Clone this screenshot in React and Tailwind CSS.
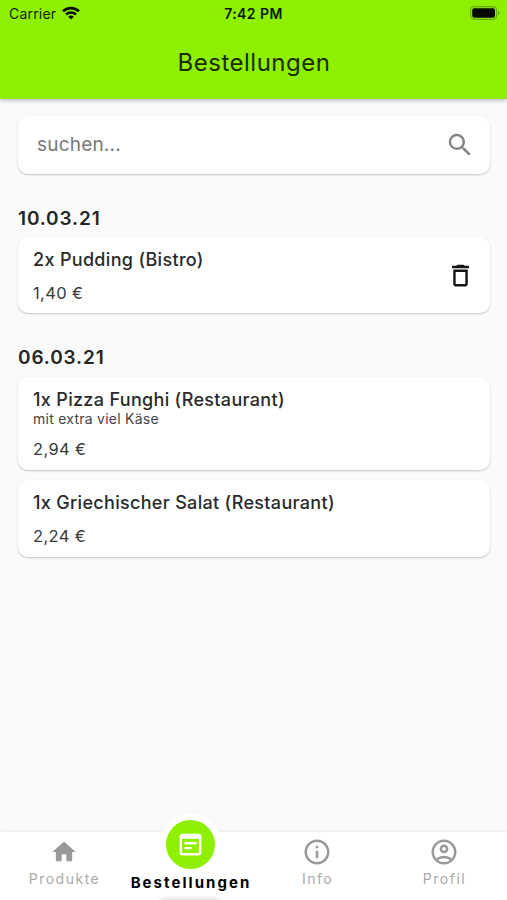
import React from 'react';

const PATHS = {
  search:
    'M15.5 14h-.79l-.28-.27A6.471 6.471 0 0 0 16 9.5 6.5 6.5 0 1 0 9.5 16c1.61 0 3.09-.59 4.23-1.57l.27.28v.79l5 4.99L20.49 19l-4.99-5zm-6 0C7.01 14 5 11.99 5 9.5S7.01 5 9.5 5 14 7.01 14 9.5 11.99 14 9.5 14z',
  trash:
    'M6 19c0 1.1.9 2 2 2h8c1.1 0 2-.9 2-2V7H6v12zM8 9h8v10H8V9zm7.5-5l-1-1h-5l-1 1H5v2h14V4h-3.5z',
  home: 'M10 20v-6h4v6h5v-8h3L12 3 2 12h3v8z',
  info: 'M11 7h2v2h-2zm0 4h2v6h-2zm1-9C6.48 2 2 6.48 2 12s4.48 10 10 10 10-4.48 10-10S17.52 2 12 2zm0 18c-4.41 0-8-3.59-8-8s3.59-8 8-8 8 3.59 8 8-3.59 8-8 8z',
  orders:
    'M19 3H5c-1.11 0-2 .9-2 2v14c0 1.1.89 2 2 2h14c1.1 0 2-.9 2-2V5c0-1.1-.9-2-2-2zm0 16H5V7.3h14v11.7zM17 12H7v-2h10v2zm-4 4H7v-2h6v2z',
  profile:
    'M12 2C6.48 2 2 6.48 2 12s4.48 10 10 10 10-4.48 10-10S17.52 2 12 2zM7.35 18.5C8.66 17.56 10.26 17 12 17s3.34.56 4.65 1.5C15.34 19.44 13.74 20 12 20s-3.34-.56-4.65-1.5zm10.79-1.38C16.45 15.8 14.32 15 12 15s-4.45.8-6.14 2.12C4.7 15.73 4 13.95 4 12c0-4.42 3.58-8 8-8s8 3.58 8 8c0 1.95-.7 3.73-1.86 5.12zM12 6c-1.93 0-3.5 1.57-3.5 3.5S10.07 13 12 13s3.5-1.57 3.5-3.5S13.93 6 12 6zm0 5c-.83 0-1.5-.67-1.5-1.5S11.17 8 12 8s1.5.67 1.5 1.5S12.83 11 12 11z',
};

function Icon({ name, className }) {
  return (
    <svg viewBox="0 0 24 24" fill="currentColor" className={className} aria-hidden="true">
      <path d={PATHS[name]} />
    </svg>
  );
}

function Wifi() {
  return (
    <svg viewBox="0 0 18 14" className="-mt-[2px] ml-[6px] h-[14px] w-[18px]" fill="none" stroke="#071000" strokeWidth="2.6">
      <path d="M1 5.3a11.6 11.6 0 0 1 16 0" />
      <path d="M4 8.5a7.2 7.2 0 0 1 10 0" />
      <path d="M9 13.6 6.2 10.8a4 4 0 0 1 5.6 0z" fill="#071000" stroke="none" />
    </svg>
  );
}

function Battery() {
  return (
    <svg viewBox="0 0 30 14" className="-mt-[1px] h-[14px] w-[30px]">
      <rect x="0.6" y="0.6" width="26" height="12.8" rx="3.6" fill="none" stroke="#65aa00" strokeWidth="1.1" />
      <rect x="2.2" y="2.3" width="22.8" height="9.4" rx="2" fill="#050a00" />
      <path d="M28 4.8c1.9.7 1.9 3.7 0 4.4z" fill="#65aa00" />
    </svg>
  );
}

function Header() {
  return (
    <header className="relative z-10 h-[98.5px] shrink-0 bg-[#8ef000] shadow-[0_1px_5px_rgba(0,0,0,0.3)]">
      <div className="grid h-[27px] grid-cols-3 items-center pl-[9px] pr-[7px] text-[14px] leading-[27px] text-[#142300]">
        <div className="flex items-center tracking-[0.2px]">
          Carrier
          <Wifi />
        </div>
        <div className="-ml-[2px] text-center font-semibold tracking-[0.45px] text-[#0d1800]">7:42 PM</div>
        <div className="flex justify-end">
          <Battery />
        </div>
      </div>
      <h1 className="mt-[20px] pl-px text-center text-[24px] leading-[32px] tracking-[0.5px] text-[#1a2c00]">Bestellungen</h1>
    </header>
  );
}

function Card({ className, children }) {
  return (
    <div
      className={`rounded-[10px] bg-white shadow-[0_1px_2px_rgba(0,0,0,0.22)] ${className}`}
    >
      {children}
    </div>
  );
}

function Order({ title, note, price, removable, className }) {
  return (
    <Card className={`flex items-center justify-between pl-[15px] pr-[15px] ${className}`}>
      <div className="flex h-full flex-col pt-[11px]">
        <div className="text-[18px] font-medium leading-[24px] tracking-[0.32px] text-[#2a2a2a]">{title}</div>
        {note && <div className="-mt-[2px] text-[14px] leading-[18px] tracking-[0.25px] text-[#444]">{note}</div>}
        <div className="mt-[10px] text-[16.5px] leading-[22px] tracking-[0.35px] text-[#3a3a3a]">{price}</div>
      </div>
      {removable && <Icon name="trash" className="h-[29px] w-[29px] text-[#151515]" />}
    </Card>
  );
}

function DateLabel({ children, className }) {
  return (
    <h2 className={`text-[19px] font-semibold leading-[24px] tracking-[0.85px] text-[#252525] ${className}`}>
      {children}
    </h2>
  );
}

function Tab({ icon, label, iconSize = 'h-[30px] w-[30px]' }) {
  return (
    <div className="flex flex-1 flex-col items-center pl-px pt-[5px]">
      <div className="flex h-[30px] items-center">
        <Icon name={icon} className={`${iconSize} text-[#999]`} />
      </div>
      <span className="mt-[3px] pl-px text-[14px] leading-[18px] tracking-[1.5px] text-[#aaa]">{label}</span>
    </div>
  );
}

export default function App() {
  return (
    <div className="flex h-[900px] w-[507px] flex-col overflow-hidden bg-[#fafafa] font-['Inter',sans-serif]">
      <Header />
      <main className="flex-1 pl-[18px] pr-[17px] pt-[17.5px]">
        <Card className="flex h-[58px] items-center justify-between pl-[19px] pr-[15px]">
          <span className="text-[19px] tracking-[0.2px] text-[#777]">suchen...</span>
          <Icon name="search" className="h-[30px] w-[30px] text-[#858585]" />
        </Card>
        <DateLabel className="mt-[33px]">10.03.21</DateLabel>
        <Order className="mt-[6px] h-[76px]" title="2x Pudding (Bistro)" price="1,40 €" removable />
        <DateLabel className="mt-[33px]">06.03.21</DateLabel>
        <Order
          className="mt-[7px] h-[93px]"
          title="1x Pizza Funghi (Restaurant)"
          note="mit extra viel Käse"
          price="2,94 €"
        />
        <Order className="mt-[10px] h-[77px]" title="1x Griechischer Salat (Restaurant)" price="2,24 €" />
      </main>
      <nav className="flex h-[68px] shrink-0 bg-white shadow-[0_-1px_3px_rgba(0,0,0,0.07)]">
        <Tab icon="home" label="Produkte" iconSize="h-[28px] w-[28px]" />
        <div className="flex flex-1 flex-col items-center">
          <div className="-mt-[18.5px] flex h-[61px] w-[61px] shrink-0 items-center justify-center rounded-full bg-white">
            <div className="flex h-[49px] w-[49px] items-center justify-center rounded-full bg-[#8ef000]">
              <Icon name="orders" className="h-[29px] w-[29px] text-white" />
            </div>
          </div>
          <span className="-mt-[0.5px] pl-[2px] text-[15px] font-bold leading-[18px] tracking-[2.05px] text-black">
            Bestellungen
          </span>
          <div className="mt-[5px] h-[8px] w-[64px] shrink-0 rounded-t-[8px] bg-[#ebebeb] blur-[1px]" />
        </div>
        <Tab icon="info" label="Info" />
        <Tab icon="profile" label="Profil" />
      </nav>
    </div>
  );
}
